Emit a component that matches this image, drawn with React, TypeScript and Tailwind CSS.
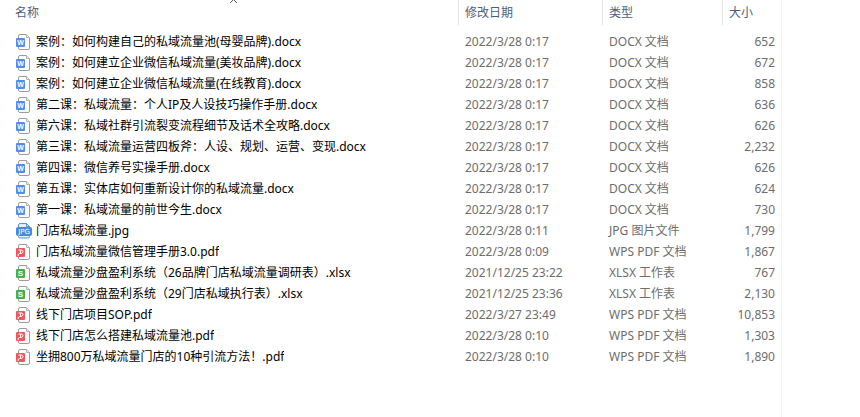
type Kind = "docx" | "jpg" | "pdf" | "xlsx";

interface FileRow {
  name: string;
  kind: Kind;
  date: string;
  size: string;
}

const typeLabels: Record<Kind, string> = {
  docx: "DOCX 文档",
  jpg: "JPG 图片文件",
  pdf: "WPS PDF 文档",
  xlsx: "XLSX 工作表",
};

const files: FileRow[] = [
  { name: "案例：如何构建自己的私域流量池(母婴品牌).docx", kind: "docx", date: "2022/3/28 0:17", size: "652" },
  { name: "案例：如何建立企业微信私域流量(美妆品牌).docx", kind: "docx", date: "2022/3/28 0:17", size: "672" },
  { name: "案例：如何建立企业微信私域流量(在线教育).docx", kind: "docx", date: "2022/3/28 0:17", size: "858" },
  { name: "第二课：私域流量：个人IP及人设技巧操作手册.docx", kind: "docx", date: "2022/3/28 0:17", size: "636" },
  { name: "第六课：私域社群引流裂变流程细节及话术全攻略.docx", kind: "docx", date: "2022/3/28 0:17", size: "626" },
  { name: "第三课：私域流量运营四板斧：人设、规划、运营、变现.docx", kind: "docx", date: "2022/3/28 0:17", size: "2,232" },
  { name: "第四课：微信养号实操手册.docx", kind: "docx", date: "2022/3/28 0:17", size: "626" },
  { name: "第五课：实体店如何重新设计你的私域流量.docx", kind: "docx", date: "2022/3/28 0:17", size: "624" },
  { name: "第一课：私域流量的前世今生.docx", kind: "docx", date: "2022/3/28 0:17", size: "730" },
  { name: "门店私域流量.jpg", kind: "jpg", date: "2022/3/28 0:11", size: "1,799" },
  { name: "门店私域流量微信管理手册3.0.pdf", kind: "pdf", date: "2022/3/28 0:09", size: "1,867" },
  { name: "私域流量沙盘盈利系统（26品牌门店私域流量调研表）.xlsx", kind: "xlsx", date: "2021/12/25 23:22", size: "767" },
  { name: "私域流量沙盘盈利系统（29门店私域执行表）.xlsx", kind: "xlsx", date: "2021/12/25 23:36", size: "2,130" },
  { name: "线下门店项目SOP.pdf", kind: "pdf", date: "2022/3/27 23:49", size: "10,853" },
  { name: "线下门店怎么搭建私域流量池.pdf", kind: "pdf", date: "2022/3/28 0:10", size: "1,303" },
  { name: "坐拥800万私域流量门店的10种引流方法！.pdf", kind: "pdf", date: "2022/3/28 0:10", size: "1,890" },
];

const badgeColors = { docx: "#4f8df2", pdf: "#f0565b", xlsx: "#47b04b" };

function FileIcon({ kind }: { kind: Kind }) {
  if (kind === "jpg") {
    return (
      <svg viewBox="0 0 16 16" className="size-4 shrink-0" aria-hidden="true">
        <path d="M2.5 5V2q0-1.500 1.500-1.500h6.500l3 3V5M2.5 12v1.500q0 1.500 1.500 1.500h8q1.500 0 1.500-1.500V12" fill="#e3edfb" stroke="#5a93e0" />
        <path d="M10.500 .5v3h3" fill="none" stroke="#5a93e0" />
        <rect x="0" y="4" width="16" height="9" rx="2" fill="#4a88dc" />
        <text x="8" y="11" textAnchor="middle" fontSize="7" fill="#fff" className="font-['DejaVu_Sans',sans-serif]">
          JPG
        </text>
      </svg>
    );
  }
  return (
    <svg viewBox="0 0 16 16" className="size-4 shrink-0" aria-hidden="true">
      <path d="M2.5 2q0-1.500 1.500-1.500h6.500l3 3V14q0 1.500-1.500 1.500H4q-1.500 0-1.500-1.500z" fill="#fff" stroke="#9b9b9b" />
      <path d="M10.500 .5v3h3" fill="#ededed" stroke="#b4b4b4" />
      <rect x="0" y="4" width="9" height="9" rx="1" fill={badgeColors[kind]} />
      {kind === "pdf" ? (
        <path d="M2.500 6H5q2 0 2 1.500T5 9.500H3.500Q2 9.500 2 12M4.500 6v3.500" fill="none" stroke="#fff" />
      ) : (
        <text x="4.5" y="11" textAnchor="middle" fontSize={kind === "docx" ? 7 : 8} fontWeight="700" fill="#fff" className="font-['Liberation_Sans',sans-serif]">
          {kind === "docx" ? "W" : "S"}
        </text>
      )}
    </svg>
  );
}

const headCell = "h-[25px] border-l border-[#e5e5e5] p-0 pl-1.5 text-left font-normal";

export default function App() {
  return (
    <main className="min-h-screen bg-white pr-[78px] font-['Noto_Sans','Noto_Sans_CJK_SC',sans-serif] text-xs">
      <div className="min-h-screen border-r border-[#f3f3f3]">
        <table className="w-full table-fixed border-separate border-spacing-0 whitespace-nowrap">
          <colgroup>
            <col />
            <col className="w-36" />
            <col className="w-[120px]" />
            <col className="w-[59px]" />
          </colgroup>
          <thead className="text-[#4c607a]">
            <tr>
              <th scope="col" aria-sort="ascending" className="relative h-[25px] p-0 pl-[15px] text-left font-normal">
                名称
                <svg viewBox="0 0 9 5" className="absolute top-0 left-1/2 h-[5px] w-[9px]" aria-hidden="true">
                  <path d="M1 3l3.500-3.500l3.500 3.500" fill="none" stroke="#5c5c5c" />
                </svg>
              </th>
              <th scope="col" className={headCell}>修改日期</th>
              <th scope="col" className={headCell}>类型</th>
              <th scope="col" className={headCell}>大小</th>
            </tr>
          </thead>
          <tbody className="text-[#6d6d6d] before:block before:h-1.5">
            {files.map((file) => (
              <tr key={file.name}>
                <td className="h-[21px] p-0 pl-4 text-black">
                  <div className="flex items-center gap-1">
                    <FileIcon kind={file.kind} />
                    <span className="truncate">{file.name}</span>
                  </div>
                </td>
                <td className="p-0 pl-[7px]">{file.date}</td>
                <td className="p-0 pl-[7px]">{typeLabels[file.kind]}</td>
                <td className="p-0 pr-1.5 text-right">{file.size}</td>
              </tr>
            ))}
          </tbody>
        </table>
      </div>
    </main>
  );
}
